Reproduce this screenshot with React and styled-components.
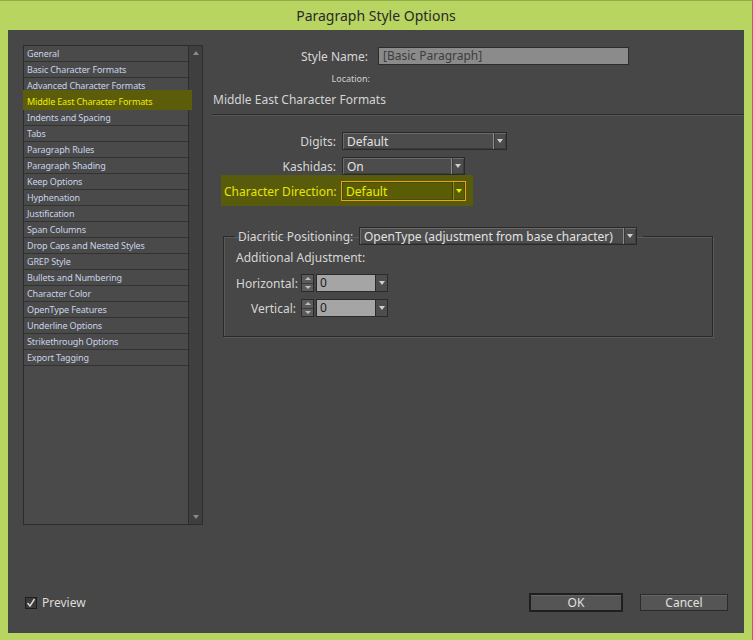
import React from 'react';
import styled, { createGlobalStyle, css } from 'styled-components';

const Global = createGlobalStyle`
  html, body { margin: 0; padding: 0; background: #b8d461; }
  body { width: 753px; height: 640px; overflow: hidden; font-family: "Noto Sans", "Open Sans", sans-serif; }
  * { box-sizing: border-box; }
`;

const Window = styled.div`
  width: 753px;
  height: 640px;
  background: #b8d461;
  border-right: 1px solid #e2456a;
  border-top: 1px solid #93ad47;
  display: flex;
  flex-direction: column;
`;

const TitleBar = styled.div`
  height: 29px;
  display: flex;
  align-items: center;
  justify-content: center;
  font-size: 14px;
  color: #2a2a2a;
`;

const Panel = styled.div`
  flex: 1;
  margin: 0 8px 7px 8px;
  background: #474747;
  display: flex;
  flex-direction: column;
  padding: 15px 0 0 15px;
`;

const Main = styled.div`
  flex: 1;
  display: flex;
  align-items: flex-start;
`;

const Sidebar = styled.div`
  width: 180px;
  height: 480px;
  border: 1px solid #2c2c2c;
  display: flex;
`;

const List = styled.div`
  flex: 1;
  display: flex;
  flex-direction: column;
  background: #4a4a4a;
`;

const Item = styled.div`
  position: relative;
  height: 16px;
  border-bottom: 1px solid #323232;
  padding-left: 3px;
  font-size: 9px;
  line-height: 15px;
  letter-spacing: -0.15px;
  color: ${p => (p.$active ? '#eded00' : '#c9d3e8')};
  white-space: nowrap;
  ${p => p.$active && css`
    &::before {
      content: '';
      position: absolute;
      top: -4px;
      left: -1px;
      right: -4px;
      bottom: -1px;
      background: #5b5d0a;
      z-index: 1;
    }
  `}
  span { position: relative; z-index: 2; }
`;

const Scrollbar = styled.div`
  width: 14px;
  border-left: 1px solid #2c2c2c;
  background: #3f3f3f;
  display: flex;
  flex-direction: column;
  justify-content: space-between;
  align-items: center;
  padding: 5px 0 5px;
`;

const Tri = styled.div`
  width: 0;
  height: 0;
  border-left: ${p => p.$w || 3.5}px solid transparent;
  border-right: ${p => p.$w || 3.5}px solid transparent;
  ${p => (p.$up
    ? css`border-bottom: ${p.$h || 4}px solid ${p.$c || '#8a8a8a'};`
    : css`border-top: ${p.$h || 4}px solid ${p.$c || '#8a8a8a'};`)}
`;

const Right = styled.div`
  flex: 1;
  margin-left: 10px;
  display: flex;
  flex-direction: column;
  align-self: stretch;
`;

const NameRow = styled.div`
  display: flex;
  align-items: center;
  margin-top: 2px;
  height: 18px;
`;

const NameLabel = styled.div`
  width: 155px;
  margin-right: 10px;
  text-align: right;
  font-size: 12px;
  color: #d6d6d6;
`;

const NameInput = styled.div`
  width: 251px;
  height: 18px;
  background: #8b8b8b;
  border: 1px solid #2c2c2c;
  font-size: 12px;
  line-height: 15px;
  padding-left: 4px;
  color: #3d3d3d;
`;

const LocationRow = styled.div`
  width: 157px;
  text-align: right;
  font-size: 9px;
  line-height: 12px;
  margin-top: 8px;
  color: #cfcfcf;
`;

const SectionTitle = styled.div`
  font-size: 12px;
  line-height: 16px;
  margin-top: 7px;
  color: #d4d4d4;
`;

const Rule = styled.div`
  height: 1px;
  margin: 6px 0 0 -1px;
  background: #2c2c2c;
  box-shadow: 0 1px 0 #555;
`;

const FormRow = styled.div`
  display: flex;
  align-items: center;
  height: 18px;
  margin-top: ${p => p.$mt}px;
`;

const FormLabel = styled.div`
  width: ${p => p.$w}px;
  margin-right: ${p => p.$mr ?? 6}px;
  text-align: ${p => p.$align || 'right'};
  font-size: 12px;
  color: ${p => p.$color || '#d6d6d6'};
  white-space: nowrap;
`;

const Highlight = styled.div`
  display: flex;
  align-items: center;
  align-self: flex-start;
  margin-left: 8px;
  padding: 6px 7px 5px 3px;
  background: #595b0c;
`;

const SelectBox = styled.div`
  width: ${p => p.$w}px;
  height: ${p => p.$h || 18}px;
  display: flex;
  align-items: stretch;
  border: 1px solid ${p => (p.$orange ? '#e9a318' : '#2a2a2a')};
  background: ${p => (p.$orange ? '#5b5d06' : '#4c4c4c')};
  box-shadow: ${p => (p.$orange ? 'inset 0 0 0 1px #4a4c00' : 'inset 1px 1px 0 #6a6a6a, inset -1px -1px 0 #3c3c3c')};
  font-size: 12px;
  color: ${p => (p.$orange ? '#ecec00' : '#e2e2e2')};
`;

const SelectValue = styled.div`
  flex: 1;
  padding-left: 4px;
  display: flex;
  align-items: center;
  white-space: nowrap;
  overflow: hidden;
`;

const SelectArrow = styled.div`
  width: 13px;
  display: flex;
  align-items: center;
  justify-content: center;
  border-left: 1px solid ${p => (p.$orange ? '#3f4100' : '#8c8c8c')};
  box-shadow: ${p => (p.$orange ? 'inset 1px 0 0 #8a8c20' : 'inset 1px 0 0 #3a3a3a')};
`;

const Group = styled.fieldset`
  margin: 21px 0 0 10px;
  width: 490px;
  border: 1px solid #2a2a2a;
  box-shadow: inset 1px 1px 0 #5a5a5a, 1px 1px 0 #5a5a5a;
  padding: 0 0 19px 12px;
  min-width: 0;
`;

const Legend = styled.legend`
  display: flex;
  align-items: center;
  padding: 0 6px 0 3px;
  margin-left: -1px;
`;

const SubTitle = styled.div`
  font-size: 12px;
  line-height: 16px;
  margin-top: 5px;
  color: #d6d6d6;
`;

const Spinner = styled.div`
  width: 13px;
  height: 18px;
  border: 1px solid #2a2a2a;
  background: #5b5b5b;
  display: flex;
  flex-direction: column;
  margin-right: 2px;
`;

const SpinHalf = styled.div`
  flex: 1;
  display: flex;
  align-items: center;
  justify-content: center;
  & + & { border-top: 1px solid #3a3a3a; }
`;

const NumField = styled.div`
  width: 72px;
  height: 18px;
  display: flex;
  border: 1px solid #2a2a2a;
`;

const NumValue = styled.div`
  flex: 1;
  background: #a5a5a5;
  color: #1c1c1c;
  font-size: 12px;
  line-height: 16px;
  padding-left: 3px;
`;

const NumArrow = styled.div`
  width: 12px;
  background: #4d4d4d;
  border-left: 1px solid #2a2a2a;
  display: flex;
  align-items: center;
  justify-content: center;
`;

const Footer = styled.div`
  height: 19px;
  margin: 0 16px 21px 2px;
  display: flex;
  align-items: center;
`;

const CheckBox = styled.div`
  width: 12px;
  height: 12px;
  background: #3a3a3a;
  border: 1px solid #1e1e1e;
  display: flex;
  align-items: center;
  justify-content: center;
  margin-right: 5px;
`;

const CheckLabel = styled.div`
  font-size: 12px;
  color: #dcdcdc;
  flex: 1;
`;

const Button = styled.div`
  width: ${p => p.$w}px;
  height: ${p => p.$h}px;
  margin-left: ${p => p.$ml || 0}px;
  display: flex;
  align-items: center;
  justify-content: center;
  background: #555;
  border: ${p => (p.$default ? '2px solid #1f1f1f' : '1px solid #2b2b2b')};
  box-shadow: inset 0 1px 0 #666;
  font-size: 12px;
  color: #e0e0e0;
`;

const items = [
  'General', 'Basic Character Formats', 'Advanced Character Formats', 'Middle East Character Formats',
  'Indents and Spacing', 'Tabs', 'Paragraph Rules', 'Paragraph Shading', 'Keep Options', 'Hyphenation',
  'Justification', 'Span Columns', 'Drop Caps and Nested Styles', 'GREP Style', 'Bullets and Numbering',
  'Character Color', 'OpenType Features', 'Underline Options', 'Strikethrough Options', 'Export Tagging',
];

function Select({ w, h, value, orange }) {
  return (
    <SelectBox $w={w} $h={h} $orange={orange}>
      <SelectValue>{value}</SelectValue>
      <SelectArrow $orange={orange}>
        <Tri $c={orange ? '#ecec00' : '#cfcfcf'} />
      </SelectArrow>
    </SelectBox>
  );
}

function NumberInput() {
  return (
    <>
      <Spinner>
        <SpinHalf><Tri $up $w={3} $h={3} $c="#bdbdbd" /></SpinHalf>
        <SpinHalf><Tri $w={3} $h={3} $c="#bdbdbd" /></SpinHalf>
      </Spinner>
      <NumField>
        <NumValue>0</NumValue>
        <NumArrow><Tri $c="#cfcfcf" /></NumArrow>
      </NumField>
    </>
  );
}

export default function App() {
  return (
    <>
      <Global />
      <Window>
        <TitleBar>Paragraph Style Options</TitleBar>
        <Panel>
          <Main>
            <Sidebar>
              <List>
                {items.map(t => (
                  <Item key={t} $active={t === 'Middle East Character Formats'}><span>{t}</span></Item>
                ))}
              </List>
              <Scrollbar>
                <Tri $up />
                <Tri />
              </Scrollbar>
            </Sidebar>
            <Right>
              <NameRow>
                <NameLabel>Style Name:</NameLabel>
                <NameInput>[Basic Paragraph]</NameInput>
              </NameRow>
              <LocationRow>Location:</LocationRow>
              <SectionTitle>Middle East Character Formats</SectionTitle>
              <Rule />
              <FormRow $mt={17}>
                <FormLabel $w={123}>Digits:</FormLabel>
                <Select w={165} value="Default" />
              </FormRow>
              <FormRow $mt={7}>
                <FormLabel $w={123}>Kashidas:</FormLabel>
                <Select w={123} value="On" />
              </FormRow>
              <Highlight>
                <FormLabel $w={112} $mr={5} $color="#e6e600">Character Direction:</FormLabel>
                <Select w={125} h={20} value="Default" orange />
              </Highlight>
              <Group>
                <Legend>
                  <FormLabel $w={113} $mr={8} $align="left">Diacritic Positioning:</FormLabel>
                  <Select w={278} value="OpenType (adjustment from base character)" />
                </Legend>
                <SubTitle>Additional Adjustment:</SubTitle>
                <FormRow $mt={8}>
                  <FormLabel $w={60} $mr={5}>Horizontal:</FormLabel>
                  <NumberInput />
                </FormRow>
                <FormRow $mt={7}>
                  <FormLabel $w={60} $mr={5}>Vertical:</FormLabel>
                  <NumberInput />
                </FormRow>
              </Group>
            </Right>
          </Main>
          <Footer>
            <CheckBox>
              <svg width="10" height="10" viewBox="0 0 10 10">
                <polyline points="1.5,5 4,8 8.5,1" fill="none" stroke="#dedede" strokeWidth="1.4" />
              </svg>
            </CheckBox>
            <CheckLabel>Preview</CheckLabel>
            <Button $w={94} $h={19} $default>OK</Button>
            <Button $w={88} $h={17} $ml={17}>Cancel</Button>
          </Footer>
        </Panel>
      </Window>
    </>
  );
}
